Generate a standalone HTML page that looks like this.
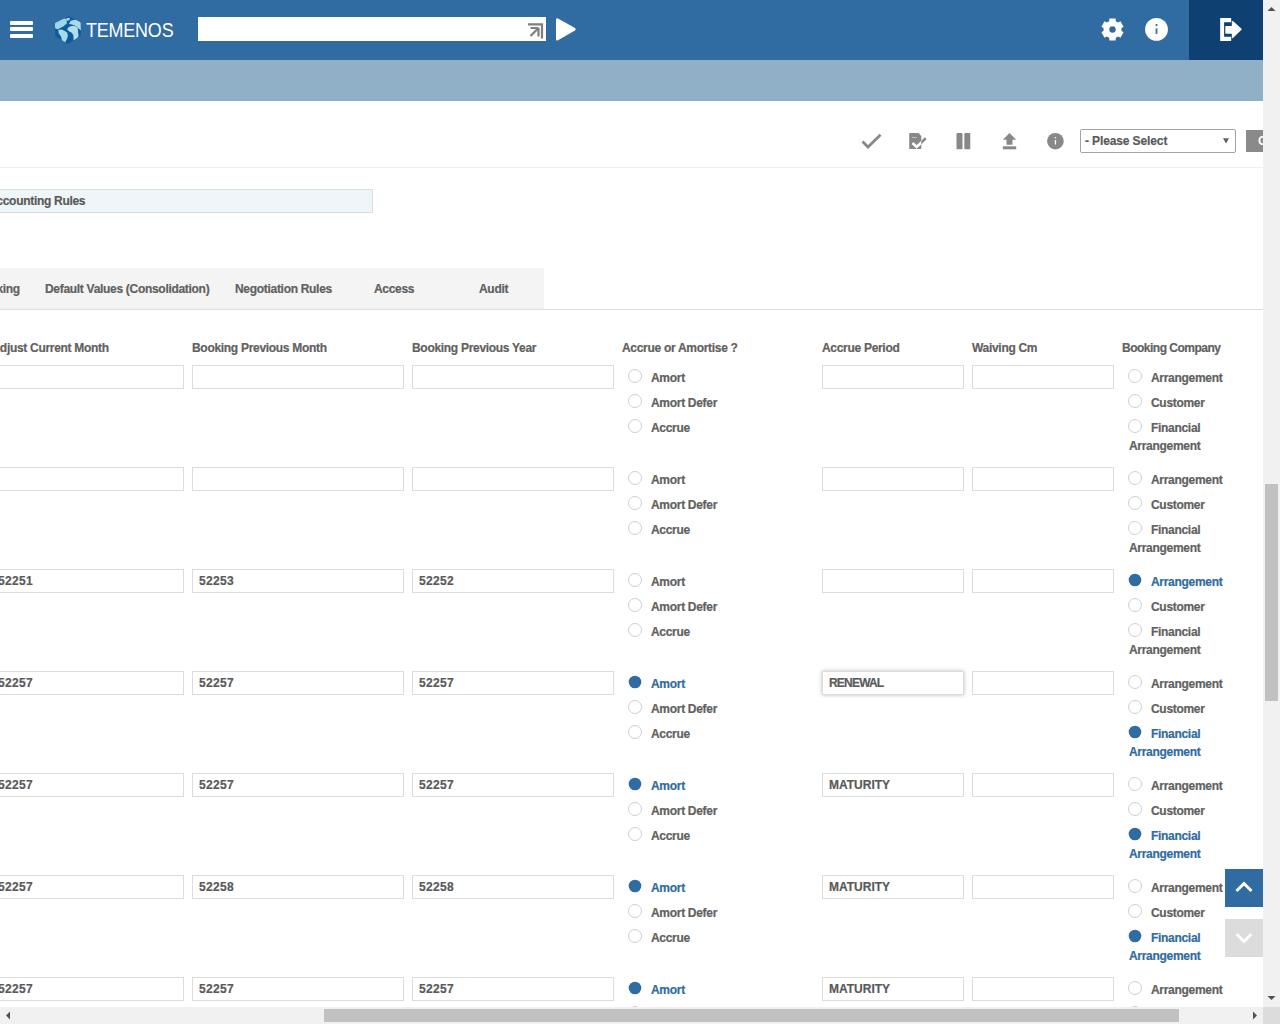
<!DOCTYPE html>
<html><head><meta charset="utf-8">
<style>
*{margin:0;padding:0;box-sizing:border-box}
html,body{width:1280px;height:1024px;overflow:hidden;background:#fff;font-family:"Liberation Sans",sans-serif}
.a{position:absolute}
.t{position:absolute;font-weight:bold;font-size:12px;letter-spacing:-0.3px;color:#616161;white-space:nowrap;line-height:14px;-webkit-text-stroke:0.2px currentColor}
.inp{position:absolute;height:24px;border:1px solid #dcdcdc;background:#fff}
.rad{position:absolute;width:14px;height:14px;border:1px solid #cfcfcf;border-radius:50%;background:#fff}
.rad.on{border:none;background:#306ba1;transform:scale(0.9)}
.t.sel{color:#306ba1}
</style></head><body>
<div class="a" style="left:0;top:0;width:1263px;height:60px;background:#306ba1"></div>
<div class="a" style="left:1189px;top:0;width:74px;height:60px;background:#0e4072"></div>
<div class="a" style="left:1263px;top:0;width:1px;height:60px;background:#fdfdfd"></div>
<div class="a" style="left:0;top:60px;width:1263px;height:41px;background:#8fb0c7"></div>
<div class="a" style="left:10px;top:21px;width:23px;height:4px;border-radius:1px;background:#fff"></div>
<div class="a" style="left:10px;top:27px;width:23px;height:4px;border-radius:1px;background:#fff"></div>
<div class="a" style="left:10px;top:34px;width:23px;height:4px;border-radius:1px;background:#fff"></div>
<svg class="a" style="left:52px;top:13px" width="32" height="34" viewBox="0 0 32 34">
<clipPath id="hx"><path d="M16.6 3.3 Q17 3.1 17.5 3.4 L28.2 9 Q28.7 9.3 28.7 10 L28.9 22.3 Q28.9 22.8 28.4 23.1 L16.5 30.4 Q16 30.7 15.5 30.4 L3.6 23.6 Q3.2 23.3 3.2 22.8 L3 10.6 Q3 10 3.5 9.7 Z"/></clipPath><path d="M16.6 3.3 Q17 3.1 17.5 3.4 L28.2 9 Q28.7 9.3 28.7 10 L28.9 22.3 Q28.9 22.8 28.4 23.1 L16.5 30.4 Q16 30.7 15.5 30.4 L3.6 23.6 Q3.2 23.3 3.2 22.8 L3 10.6 Q3 10 3.5 9.7 Z" fill="#0d5aa0"/><g clip-path="url(#hx)">
<path d="M2.3 10.2 L2.5 15.2 L6.3 16.4 L7.9 14.9 L10.9 13.8 L14.8 10.6 L14.8 6.9 L13.2 5.4 L10.2 4.9 L6.3 6.5 L3.3 8.3 Z" fill="#9fd6e6"/>
<path d="M14.0 5.5 L17.8 4.8 L17.5 7.1 L15.2 7.8 Z" fill="#b5e2ee"/>
<path d="M6.3 16.9 L6.7 20.3 L9.3 24.1 L10.1 29.5 L12.8 30.2 L15.1 25.6 L15.9 22.6 L15.1 19.5 L12.8 18.0 L9.8 16.5 Z" fill="#a7dbe8"/>
<path d="M17.0 10.9 L18.6 7.8 L23.9 6.6 L27.0 8.1 L29.3 9.8 L29.6 18.1 L27.7 16.5 L25.4 14.4 L23.2 12.7 L20.1 11.6 Z" fill="#a7dbe8"/>
<path d="M15.1 16.6 L16.7 13.9 L20.5 12.8 L24.3 13.6 L25.8 15.4 L26.2 20.0 L26.6 23.1 L23.6 27.7 L21.6 26.9 L21.3 22.0 L19.7 19.7 L17.4 18.5 Z" fill="#b0dfeb"/>
</g>
</svg>
<div class="a" style="left:86px;top:19px;font-size:19.5px;line-height:22px;color:#fff;letter-spacing:-0.2px;transform:scaleX(0.92);transform-origin:0 0">TEMENOS</div>
<div class="a" style="left:198px;top:17px;width:348px;height:24px;background:#fff"></div>
<svg class="a" style="left:520px;top:17px" width="26" height="24" viewBox="0 0 26 24">
<path d="M8 7.3 H22 V21.5" fill="none" stroke="#7f7f7f" stroke-width="2.2"/>
<path d="M18.5 11 V19.5 M10.5 11 H18.5 M18.5 11 L10.5 19" fill="none" stroke="#7f7f7f" stroke-width="2.2"/>
</svg>
<svg class="a" style="left:554px;top:16px" width="26" height="27" viewBox="0 0 26 27">
<path d="M2 3.7 Q2 1.5 4 2.5 L21 12 Q22.6 13.4 21 14.4 L4 24.3 Q2 25.3 2 23.2 Z" fill="#fff"/>
</svg>
<svg class="a" style="left:1098px;top:15px" width="29" height="29" viewBox="0 0 29 29"><path fill="#fff" fill-rule="evenodd" d="M11.43 3.52 L17.57 3.52 L17.81 6.13 L20.09 7.45 L22.48 6.36 L25.54 11.66 L23.40 13.19 L23.40 15.81 L25.54 17.34 L22.48 22.64 L20.09 21.55 L17.81 22.87 L17.57 25.48 L11.43 25.48 L11.19 22.87 L8.91 21.55 L6.52 22.64 L3.46 17.34 L5.60 15.81 L5.60 13.19 L3.46 11.66 L6.52 6.36 L8.91 7.45 L11.19 6.13 Z M14.5 11.3 A3.2 3.2 0 1 0 14.5 17.7 A3.2 3.2 0 1 0 14.5 11.3 Z"/></svg>
<svg class="a" style="left:1144px;top:17px" width="25" height="25" viewBox="0 0 25 25">
<circle cx="12.5" cy="12.4" r="11.4" fill="#fff"/>
<circle cx="12.5" cy="8.1" r="1.1" fill="#306ba1"/>
<rect x="11.6" y="11.4" width="1.8" height="5.5" fill="#306ba1"/>
</svg>
<svg class="a" style="left:1218px;top:16px" width="26" height="27" viewBox="0 0 26 27">
<path d="M2.8 2.6 H12.6 V5.7 H5.5 V21.3 H12.6 V24.4 H2.8 Z" fill="#fff" stroke="#fff" stroke-width="1.2" stroke-linejoin="round"/>
<path d="M8 10.8 H14.5 V5.6 L23 13.3 L14.5 21.4 V17 H8 Z" fill="#fff" stroke="#fff" stroke-width="1.4" stroke-linejoin="round"/>
</svg>
<div class="a" style="left:0;top:167px;width:1263px;height:1px;background:#efefef"></div>
<svg class="a" style="left:855px;top:125px" width="220" height="30" viewBox="855 125 220 30">
<path d="M862.5 141.5 L868 147 L880.5 134.8" fill="none" stroke="#888888" stroke-width="2.7"/>
<path d="M910.2 133 H918.6 L921.3 136 V148 Q921.3 149 920.3 149 H910.2 Q909.2 149 909.2 148 V134 Q909.2 133 910.2 133 Z" fill="#888888"/>
<path d="M912 137.5 H917" stroke="#bdbdbd" stroke-width="1"/>
<clipPath id="cin"><rect x="905" y="130" width="16.3" height="22"/></clipPath>
<clipPath id="cout"><rect x="921.3" y="125" width="10" height="30"/></clipPath>
<path d="M912.5 143 L916.6 147 L925.8 138.2" fill="none" stroke="#fff" stroke-width="2.6" clip-path="url(#cin)"/>
<path d="M912.5 143 L916.6 147 L925.8 138.2" fill="none" stroke="#888888" stroke-width="2.6" clip-path="url(#cout)"/>
<rect x="956.5" y="133" width="6" height="16.2" rx="1" fill="#888888"/>
<rect x="964.3" y="133" width="6" height="16.2" rx="1" fill="#888888"/>
<path d="M1009.5 133 L1016.2 139.8 H1012.5 V144.8 H1006.5 V139.8 H1002.8 Z" fill="#888888"/>
<rect x="1002.8" y="146.3" width="13.4" height="3" fill="#888888"/>
<circle cx="1055.4" cy="141.2" r="8.3" fill="#888888"/>
<rect x="1054.8" y="140" width="1.3" height="4.5" fill="#fff"/>
<circle cx="1055.4" cy="137.8" r="0.8" fill="#fff"/>
</svg>
<div class="a" style="left:1080px;top:129px;width:156px;height:24px;border:1px solid #a3a3a3;border-radius:2px;background:#fff"></div>
<div class="t" style="left:1085px;top:134px;color:#5a5a5a;letter-spacing:-0.12px">- Please Select</div>
<svg class="a" style="left:1222px;top:137px" width="8" height="7" viewBox="0 0 8 7"><path d="M1 1.2 H7 L4 6.4 Z" fill="#606060"/></svg>
<div class="a" style="left:1246px;top:130px;width:17px;height:22px;background:#8a8a8a"></div>
<div class="a" style="left:1258px;top:134px;font-size:12px;font-weight:bold;color:#fff;line-height:14px;width:5px;overflow:hidden">G</div>
<div class="a" style="left:-10px;top:189px;width:383px;height:24px;border:1px solid #dcdcdc;background:#eef6fa"></div>
<div class="t" style="left:-12px;top:194px;color:#5a5a5a">Accounting Rules</div>
<div class="a" style="left:0;top:268px;width:544px;height:41px;background:#f4f4f4"></div>
<div class="a" style="left:0;top:309px;width:1263px;height:1px;background:#dedede"></div>
<div class="t" style="left:-26px;top:282px">Booking</div>
<div class="t" style="left:45px;top:282px">Default Values (Consolidation)</div>
<div class="t" style="left:235px;top:282px">Negotiation Rules</div>
<div class="t" style="left:374px;top:282px">Access</div>
<div class="t" style="left:479px;top:282px">Audit</div>
<div class="t" style="left:-8.5px;top:341px">Adjust Current Month</div>
<div class="t" style="left:192px;top:341px">Booking Previous Month</div>
<div class="t" style="left:412px;top:341px">Booking Previous Year</div>
<div class="t" style="left:622px;top:341px">Accrue or Amortise ?</div>
<div class="t" style="left:822px;top:341px">Accrue Period</div>
<div class="t" style="left:972px;top:341px">Waiving Cm</div>
<div class="t" style="left:1122px;top:341px"><span style="letter-spacing:-0.5px">Booking Company</span></div>
<div class="inp" style="left:-10px;top:365px;width:194px"></div>
<div class="inp" style="left:192px;top:365px;width:212px"></div>
<div class="inp" style="left:412px;top:365px;width:202px"></div>
<div class="inp" style="left:822px;top:365px;width:142px"></div>
<div class="inp" style="left:972px;top:365px;width:142px"></div>
<div class="rad" style="left:628px;top:369px"></div>
<div class="t" style="left:651px;top:371px">Amort</div>
<div class="rad" style="left:628px;top:394px"></div>
<div class="t" style="left:651px;top:396px">Amort Defer</div>
<div class="rad" style="left:628px;top:419px"></div>
<div class="t" style="left:651px;top:421px">Accrue</div>
<div class="rad" style="left:1128px;top:369px"></div>
<div class="t" style="left:1151px;top:371px">Arrangement</div>
<div class="rad" style="left:1128px;top:394px"></div>
<div class="t" style="left:1151px;top:396px">Customer</div>
<div class="rad" style="left:1128px;top:419px"></div>
<div class="t" style="left:1151px;top:421px">Financial</div>
<div class="t" style="left:1129px;top:439px">Arrangement</div>
<div class="inp" style="left:-10px;top:467px;width:194px"></div>
<div class="inp" style="left:192px;top:467px;width:212px"></div>
<div class="inp" style="left:412px;top:467px;width:202px"></div>
<div class="inp" style="left:822px;top:467px;width:142px"></div>
<div class="inp" style="left:972px;top:467px;width:142px"></div>
<div class="rad" style="left:628px;top:471px"></div>
<div class="t" style="left:651px;top:473px">Amort</div>
<div class="rad" style="left:628px;top:496px"></div>
<div class="t" style="left:651px;top:498px">Amort Defer</div>
<div class="rad" style="left:628px;top:521px"></div>
<div class="t" style="left:651px;top:523px">Accrue</div>
<div class="rad" style="left:1128px;top:471px"></div>
<div class="t" style="left:1151px;top:473px">Arrangement</div>
<div class="rad" style="left:1128px;top:496px"></div>
<div class="t" style="left:1151px;top:498px">Customer</div>
<div class="rad" style="left:1128px;top:521px"></div>
<div class="t" style="left:1151px;top:523px">Financial</div>
<div class="t" style="left:1129px;top:541px">Arrangement</div>
<div class="inp" style="left:-10px;top:569px;width:194px"></div>
<div class="t" style="left:-2px;top:574px;letter-spacing:0.3px;color:#5a5a5a">52251</div>
<div class="inp" style="left:192px;top:569px;width:212px"></div>
<div class="t" style="left:199px;top:574px;letter-spacing:0.3px;color:#5a5a5a">52253</div>
<div class="inp" style="left:412px;top:569px;width:202px"></div>
<div class="t" style="left:419px;top:574px;letter-spacing:0.3px;color:#5a5a5a">52252</div>
<div class="inp" style="left:822px;top:569px;width:142px"></div>
<div class="inp" style="left:972px;top:569px;width:142px"></div>
<div class="rad" style="left:628px;top:573px"></div>
<div class="t" style="left:651px;top:575px">Amort</div>
<div class="rad" style="left:628px;top:598px"></div>
<div class="t" style="left:651px;top:600px">Amort Defer</div>
<div class="rad" style="left:628px;top:623px"></div>
<div class="t" style="left:651px;top:625px">Accrue</div>
<div class="rad on" style="left:1128px;top:573px"></div>
<div class="t sel" style="left:1151px;top:575px">Arrangement</div>
<div class="rad" style="left:1128px;top:598px"></div>
<div class="t" style="left:1151px;top:600px">Customer</div>
<div class="rad" style="left:1128px;top:623px"></div>
<div class="t" style="left:1151px;top:625px">Financial</div>
<div class="t" style="left:1129px;top:643px">Arrangement</div>
<div class="inp" style="left:-10px;top:671px;width:194px"></div>
<div class="t" style="left:-2px;top:676px;letter-spacing:0.3px;color:#5a5a5a">52257</div>
<div class="inp" style="left:192px;top:671px;width:212px"></div>
<div class="t" style="left:199px;top:676px;letter-spacing:0.3px;color:#5a5a5a">52257</div>
<div class="inp" style="left:412px;top:671px;width:202px"></div>
<div class="t" style="left:419px;top:676px;letter-spacing:0.3px;color:#5a5a5a">52257</div>
<div class="inp" style="left:822px;top:671px;width:142px;box-shadow:0 0 4px rgba(0,0,0,0.25)"></div>
<div class="t" style="left:829px;top:676px;letter-spacing:-0.8px;color:#5a5a5a">RENEWAL</div>
<div class="inp" style="left:972px;top:671px;width:142px"></div>
<div class="rad on" style="left:628px;top:675px"></div>
<div class="t sel" style="left:651px;top:677px">Amort</div>
<div class="rad" style="left:628px;top:700px"></div>
<div class="t" style="left:651px;top:702px">Amort Defer</div>
<div class="rad" style="left:628px;top:725px"></div>
<div class="t" style="left:651px;top:727px">Accrue</div>
<div class="rad" style="left:1128px;top:675px"></div>
<div class="t" style="left:1151px;top:677px">Arrangement</div>
<div class="rad" style="left:1128px;top:700px"></div>
<div class="t" style="left:1151px;top:702px">Customer</div>
<div class="rad on" style="left:1128px;top:725px"></div>
<div class="t sel" style="left:1151px;top:727px">Financial</div>
<div class="t sel" style="left:1129px;top:745px">Arrangement</div>
<div class="inp" style="left:-10px;top:773px;width:194px"></div>
<div class="t" style="left:-2px;top:778px;letter-spacing:0.3px;color:#5a5a5a">52257</div>
<div class="inp" style="left:192px;top:773px;width:212px"></div>
<div class="t" style="left:199px;top:778px;letter-spacing:0.3px;color:#5a5a5a">52257</div>
<div class="inp" style="left:412px;top:773px;width:202px"></div>
<div class="t" style="left:419px;top:778px;letter-spacing:0.3px;color:#5a5a5a">52257</div>
<div class="inp" style="left:822px;top:773px;width:142px"></div>
<div class="t" style="left:829px;top:778px;letter-spacing:0;color:#5a5a5a">MATURITY</div>
<div class="inp" style="left:972px;top:773px;width:142px"></div>
<div class="rad on" style="left:628px;top:777px"></div>
<div class="t sel" style="left:651px;top:779px">Amort</div>
<div class="rad" style="left:628px;top:802px"></div>
<div class="t" style="left:651px;top:804px">Amort Defer</div>
<div class="rad" style="left:628px;top:827px"></div>
<div class="t" style="left:651px;top:829px">Accrue</div>
<div class="rad" style="left:1128px;top:777px"></div>
<div class="t" style="left:1151px;top:779px">Arrangement</div>
<div class="rad" style="left:1128px;top:802px"></div>
<div class="t" style="left:1151px;top:804px">Customer</div>
<div class="rad on" style="left:1128px;top:827px"></div>
<div class="t sel" style="left:1151px;top:829px">Financial</div>
<div class="t sel" style="left:1129px;top:847px">Arrangement</div>
<div class="inp" style="left:-10px;top:875px;width:194px"></div>
<div class="t" style="left:-2px;top:880px;letter-spacing:0.3px;color:#5a5a5a">52257</div>
<div class="inp" style="left:192px;top:875px;width:212px"></div>
<div class="t" style="left:199px;top:880px;letter-spacing:0.3px;color:#5a5a5a">52258</div>
<div class="inp" style="left:412px;top:875px;width:202px"></div>
<div class="t" style="left:419px;top:880px;letter-spacing:0.3px;color:#5a5a5a">52258</div>
<div class="inp" style="left:822px;top:875px;width:142px"></div>
<div class="t" style="left:829px;top:880px;letter-spacing:0;color:#5a5a5a">MATURITY</div>
<div class="inp" style="left:972px;top:875px;width:142px"></div>
<div class="rad on" style="left:628px;top:879px"></div>
<div class="t sel" style="left:651px;top:881px">Amort</div>
<div class="rad" style="left:628px;top:904px"></div>
<div class="t" style="left:651px;top:906px">Amort Defer</div>
<div class="rad" style="left:628px;top:929px"></div>
<div class="t" style="left:651px;top:931px">Accrue</div>
<div class="rad" style="left:1128px;top:879px"></div>
<div class="t" style="left:1151px;top:881px">Arrangement</div>
<div class="rad" style="left:1128px;top:904px"></div>
<div class="t" style="left:1151px;top:906px">Customer</div>
<div class="rad on" style="left:1128px;top:929px"></div>
<div class="t sel" style="left:1151px;top:931px">Financial</div>
<div class="t sel" style="left:1129px;top:949px">Arrangement</div>
<div class="inp" style="left:-10px;top:977px;width:194px"></div>
<div class="t" style="left:-2px;top:982px;letter-spacing:0.3px;color:#5a5a5a">52257</div>
<div class="inp" style="left:192px;top:977px;width:212px"></div>
<div class="t" style="left:199px;top:982px;letter-spacing:0.3px;color:#5a5a5a">52257</div>
<div class="inp" style="left:412px;top:977px;width:202px"></div>
<div class="t" style="left:419px;top:982px;letter-spacing:0.3px;color:#5a5a5a">52257</div>
<div class="inp" style="left:822px;top:977px;width:142px"></div>
<div class="t" style="left:829px;top:982px;letter-spacing:0;color:#5a5a5a">MATURITY</div>
<div class="inp" style="left:972px;top:977px;width:142px"></div>
<div class="rad on" style="left:628px;top:981px"></div>
<div class="t sel" style="left:651px;top:983px">Amort</div>
<div class="rad" style="left:628px;top:1006px"></div>
<div class="t" style="left:651px;top:1008px">Amort Defer</div>
<div class="rad" style="left:628px;top:1031px"></div>
<div class="t" style="left:651px;top:1033px">Accrue</div>
<div class="rad" style="left:1128px;top:981px"></div>
<div class="t" style="left:1151px;top:983px">Arrangement</div>
<div class="rad" style="left:1128px;top:1006px"></div>
<div class="t" style="left:1151px;top:1008px">Customer</div>
<div class="rad on" style="left:1128px;top:1031px"></div>
<div class="t sel" style="left:1151px;top:1033px">Financial</div>
<div class="t sel" style="left:1129px;top:1051px">Arrangement</div>
<div class="a" style="left:1225px;top:869px;width:38px;height:38px;background:#306ba1"></div>
<svg class="a" style="left:1225px;top:869px" width="38" height="38" viewBox="0 0 38 38"><path d="M11.5 22 L19 14.5 L26.5 22" fill="none" stroke="#fff" stroke-width="3"/></svg>
<div class="a" style="left:1225px;top:919px;width:38px;height:38px;background:#dcdcdc"></div>
<svg class="a" style="left:1225px;top:919px" width="38" height="38" viewBox="0 0 38 38"><path d="M11.5 15 L19 22.5 L26.5 15" fill="none" stroke="#fff" stroke-width="3"/></svg>
<div class="a" style="left:1263px;top:0;width:17px;height:1007px;background:#f1f1f1"></div>
<div class="a" style="left:1265px;top:484px;width:13px;height:217px;background:#c1c1c1"></div>
<svg class="a" style="left:1263px;top:0" width="17" height="17" viewBox="0 0 17 17"><path d="M4.5 11 L8.5 7 L12.5 11 Z" fill="#505050"/></svg>
<svg class="a" style="left:1263px;top:990px" width="17" height="17" viewBox="0 0 17 17"><path d="M4.5 6 L8.5 10 L12.5 6 Z" fill="#505050"/></svg>
<div class="a" style="left:0;top:1007px;width:1263px;height:17px;background:#f1f1f1"></div>
<div class="a" style="left:324px;top:1009px;width:855px;height:13px;background:#c1c1c1"></div>
<svg class="a" style="left:0;top:1007px" width="17" height="17" viewBox="0 0 17 17"><path d="M10 4.5 L6 8.5 L10 12.5 Z" fill="#505050"/></svg>
<svg class="a" style="left:1246px;top:1007px" width="17" height="17" viewBox="0 0 17 17"><path d="M7 4.5 L11 8.5 L7 12.5 Z" fill="#505050"/></svg>
<div class="a" style="left:1263px;top:1007px;width:17px;height:17px;background:#dcdcdc"></div>
</body></html>
